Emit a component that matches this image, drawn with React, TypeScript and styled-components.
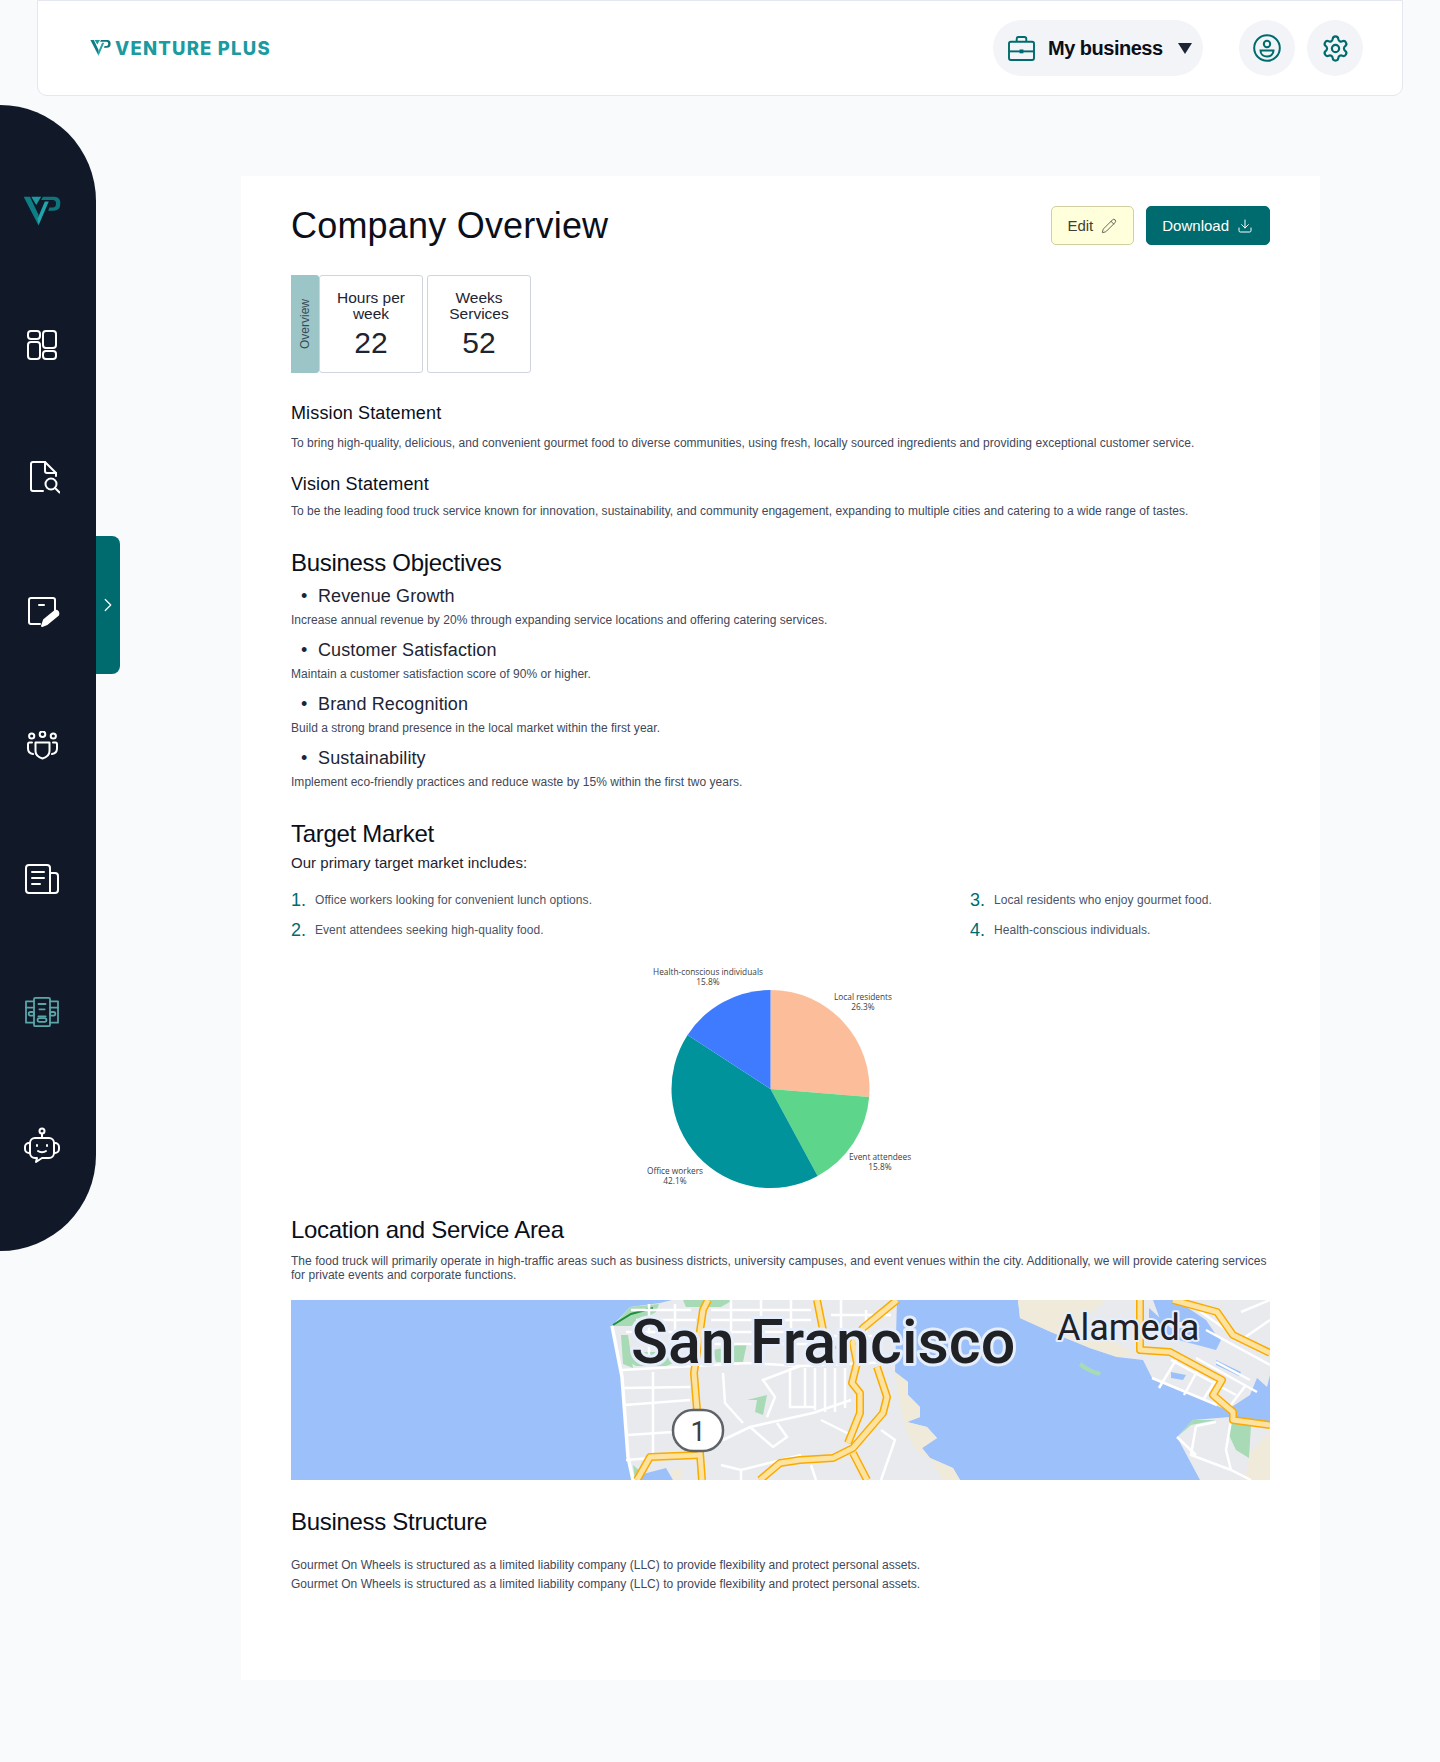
import styled, { createGlobalStyle } from "styled-components";
import { Download, Pencil, Settings, ChevronRight } from "lucide-react";

const GlobalStyle = createGlobalStyle`
  body {
    margin: 0;
    background: #f9fafc;
    font-family: "Liberation Sans", Arial, sans-serif;
    color: #101828;
  }
`;

const Page = styled.div`
  width: 1440px;
  height: 1762px;
  overflow: hidden;
`;

const TopBar = styled.header`
  box-sizing: border-box;
  margin: 0 37px;
  height: 96px;
  padding: 0 39px 0 52px;
  display: flex;
  align-items: center;
  background: #fff;
  border: 1px solid #e4e7f0;
  border-radius: 0 0 10px 10px;
`;

const Logo = styled.div`
  display: flex;
  align-items: center;
  gap: 4px;
  flex: 1;
  font-family: "Inter", sans-serif;
  font-size: 18.5px;
  font-weight: 800;
  letter-spacing: 1.2px;
  color: #1b9aa0;
`;

const BusinessPill = styled.div`
  box-sizing: border-box;
  flex: none;
  width: 210px;
  height: 56px;
  margin-right: 24px;
  padding: 0 15px;
  display: flex;
  align-items: center;
  gap: 13px;
  border-radius: 28px;
  background: #f2f4f8;
  font-size: 20px;
  font-weight: 700;
  letter-spacing: -0.5px;
  color: #0b0f19;
  white-space: nowrap;
`;

const Caret = styled.span`
  flex: none;
  width: 0;
  height: 0;
  margin-left: 2px;
  border-left: 7.5px solid transparent;
  border-right: 7.5px solid transparent;
  border-top: 11px solid #1d2433;
`;

const RoundButton = styled.div`
  flex: none;
  width: 56px;
  height: 56px;
  margin-left: 12px;
  display: flex;
  align-items: center;
  justify-content: center;
  border-radius: 50%;
  background: #f2f4f8;
  color: #006b6e;
`;

const Body = styled.div`
  display: flex;
  align-items: flex-start;
  margin-top: 9px;
`;

const Sidebar = styled.nav`
  position: relative;
  box-sizing: border-box;
  flex: none;
  width: 96px;
  height: 1146px;
  padding: 86px 12px 0 0;
  display: flex;
  flex-direction: column;
  align-items: center;
  gap: 93.5px;
  background: #111827;
  border-radius: 0 96px 96px 0;
`;

const NavIcon = styled.div<{ $active?: boolean }>`
  height: 40px;
  display: flex;
  align-items: center;
  justify-content: center;
  color: ${(p) => (p.$active ? "#5ba6aa" : "#fff")};
`;

const Handle = styled.div`
  position: absolute;
  left: 96px;
  top: 431px;
  width: 24px;
  height: 138px;
  display: flex;
  align-items: center;
  justify-content: center;
  background: #006b6e;
  border-radius: 0 8px 8px 0;
  color: #fff;
`;

const Card = styled.main`
  box-sizing: border-box;
  flex: none;
  width: 1079px;
  height: 1504px;
  margin: 71px 0 0 145px;
  padding: 30px 50px 0;
  background: #fff;
`;

const TitleRow = styled.div`
  display: flex;
  align-items: flex-start;
  height: 40px;
  margin-bottom: 29px;
`;

const Title = styled.h1`
  flex: 1;
  margin: 0;
  font-size: 36px;
  line-height: 40px;
  font-weight: 400;
  letter-spacing: 0.2px;
  color: #0b0f19;
`;

const ActionButton = styled.div<{ $primary?: boolean }>`
  box-sizing: border-box;
  height: 39px;
  margin-left: 12px;
  padding: 0 16px 0 15px;
  display: flex;
  align-items: center;
  gap: 8px;
  border-radius: 5px;
  font-size: 15px;
  background: ${(p) => (p.$primary ? "#006b6e" : "#ffffdc")};
  border: 1px solid ${(p) => (p.$primary ? "#006b6e" : "#d2cfa0")};
  color: ${(p) => (p.$primary ? "#fff" : "#403f36")};
`;

const Stats = styled.div`
  display: flex;
  height: 98px;
  margin-bottom: 29px;
`;

const StatsLabel = styled.div`
  box-sizing: border-box;
  width: 28px;
  display: flex;
  align-items: center;
  justify-content: center;
  background: #9cc5c8;
  border-radius: 3px 0 0 3px;
  font-size: 12px;
  color: #3a4a55;
  writing-mode: vertical-rl;
  transform: rotate(180deg);
`;

const StatCard = styled.div<{ $width: number; $gap?: number }>`
  box-sizing: border-box;
  width: ${(p) => p.$width}px;
  margin-left: ${(p) => p.$gap ?? 0}px;
  padding-top: 14px;
  text-align: center;
  border: 1px solid #cfd4e0;
  border-radius: 3px;
  color: #1d2433;
`;

const StatTitle = styled.div`
  font-size: 15.5px;
  line-height: 16px;
`;

const StatValue = styled.div`
  margin-top: 4px;
  font-size: 30px;
  line-height: 34px;
`;

const SubHeading = styled.h3<{ $top: number }>`
  margin: ${(p) => p.$top}px 0 0;
  font-size: 18px;
  line-height: 22px;
  font-weight: 400;
  letter-spacing: 0.13px;
  color: #0b0f19;
`;

const Heading = styled.h2<{ $top: number }>`
  margin: ${(p) => p.$top}px 0 0;
  font-size: 24px;
  line-height: 28px;
  font-weight: 400;
  letter-spacing: -0.3px;
  color: #0b0f19;
`;

const Text = styled.p<{ $top: number }>`
  margin: ${(p) => p.$top}px 0 0;
  font-size: 12px;
  line-height: 14px;
  letter-spacing: 0.03px;
  color: #3f4859;
`;

const Bullet = styled.div<{ $first?: boolean }>`
  margin-top: ${(p) => (p.$first ? 8 : 12)}px;
  padding-left: 27px;
  position: relative;
  font-size: 18px;
  line-height: 22px;
  letter-spacing: 0.12px;
  color: #1d2433;

  &::before {
    content: "•";
    position: absolute;
    left: 10px;
  }
`;

const Lead = styled.p`
  margin: 6px 0 0;
  font-size: 15px;
  line-height: 18px;
  letter-spacing: 0.03px;
  color: #1d2433;
`;

const MarketList = styled.div`
  display: grid;
  grid-template-columns: 679px 1fr;
  grid-auto-flow: column;
  grid-template-rows: 30px 30px;
  margin-top: 13px;
`;

const MarketItem = styled.div`
  display: flex;
  align-items: center;
  font-size: 12px;
  letter-spacing: 0.06px;
  color: #4a5365;
`;

const MarketNumber = styled.span`
  width: 24px;
  font-size: 18px;
  color: #006b6e;
`;

const PieWrap = styled.div`
  display: flex;
  justify-content: center;
  margin-top: 19px;
`;

const MapWrap = styled.div`
  margin-top: 18px;
  height: 180px;
  line-height: 0;
`;

const polar = (pct: number, r: number) => {
  const a = (pct / 100) * Math.PI * 2;
  return [139.5 + r * Math.sin(a), 125 - r * Math.cos(a)];
};

const slices = [
  { from: 0, to: 26.3, color: "#fcbd9b" },
  { from: 26.3, to: 42.1, color: "#5dd58b" },
  { from: 42.1, to: 84.2, color: "#00939b" },
  { from: 84.2, to: 100, color: "#3f7bff" },
];

const pieLabels = [
  { x: 77, y: 11, a: "Health-conscious individuals", b: "15.8%" },
  { x: 232, y: 36, a: "Local residents", b: "26.3%" },
  { x: 249, y: 196, a: "Event attendees", b: "15.8%" },
  { x: 44, y: 210, a: "Office workers", b: "42.1%" },
];

const PieChart = () => (
  <svg width="300" height="240" viewBox="0 0 300 240">
    {slices.map((s) => {
      const [x1, y1] = polar(s.from, 99);
      const [x2, y2] = polar(s.to, 99);
      const large = s.to - s.from > 50 ? 1 : 0;
      return (
        <path
          key={s.color}
          d={`M139.5 125L${x1} ${y1}A99 99 0 ${large} 1 ${x2} ${y2}Z`}
          fill={s.color}
        />
      );
    })}
    {pieLabels.map((l) => (
      <text
        key={l.a}
        textAnchor="middle"
        fontFamily="Open Sans, sans-serif"
        fontSize="8.3"
        fill="#3d3d3d"
      >
        <tspan x={l.x} y={l.y}>
          {l.a}
        </tspan>
        <tspan x={l.x} y={l.y + 10}>
          {l.b}
        </tspan>
      </text>
    ))}
  </svg>
);

const highways = [
  "M417 0L412 10L403 73L406 110L409 153L411 180",
  "M346 180L359 157L409 155",
  "M526 0L532 30L542 50",
  "M469 180L489 163L509 160L542 158L562 148L592 113L596 97L586 67",
  "M557 143L569 113L569 93L561 83L566 63L562 43L572 28L606 0",
  "M562 153L576 180",
  "M849 0V50L879 52L931 80L922 95L942 112V120L979 125",
  "M882 0L926 12L942 35L979 53",
];

const streets = [
  "M331 70L456 63L509 66L600 62",
  "M332 88L399 87M334 105L399 100M337 135L382 132",
  "M335 160L400 155",
  "M362 72V155",
  "M432 73L434 103L452 123",
  "M432 140L459 127L522 113L560 100",
  "M459 127L482 147L496 137L486 123",
  "M476 117L484 97L472 80L509 66",
  "M430 165L450 170L510 155",
  "M340 10H400M345 20H405M335 32H400M420 10H520M420 20H520M420 32H520M420 44H520",
  "M358 4V60M384 4V60M440 0V60M470 0V60M500 0V60",
  "M499 68V107H525M514 68V108M524 68V110M534 68V112M544 68V112M554 68V108",
  "M540 15H600M540 36H590M550 0V60M575 10V50",
  "M530 120L560 135",
  "M590 130L604 140L590 180",
  "M520 165L525 180M450 170V180",
  "M861 78L926 105M880 60L945 95M905 58L966 92M925 62L959 80",
  "M885 60L868 88M908 68L893 95M928 75L912 100M955 85L936 110",
  "M900 5L950 40L979 20M915 30L979 65M950 12L979 0",
  "M905 126L900 155L940 170L960 180M905 155L886 137M925 122L905 126M940 120L935 150L940 170",
];

const MapImage = () => (
  <svg width="979" height="180" viewBox="0 0 979 180">
    <rect width="979" height="180" fill="#9cc0f9" />
    <path
      d="M321 26L339 7L369 3L381 0H606L604 72L617 82L617 95L629 107V117L616 122L636 127L646 138L631 148L639 158L662 168L669 180H342L337 157L331 77Z"
      fill="#e9eaee"
    />
    <path
      d="M604 72L617 82L617 95L629 107V117L616 122L636 127L646 138L631 148L639 158L662 168L669 180H652L640 160L625 150L615 130L608 100Z"
      fill="#f0eadb"
    />
    <path d="M322 26L339 7L368 4L365 12L340 26Z" fill="#a8dab5" />
    <path d="M322 25L340 14L362 8" fill="none" stroke="#1e8e3e" strokeWidth="2" />
    <path d="M392 0H442L430 7H395Z" fill="#a8dab5" />
    <path d="M330 35L337 35L342 68L332 64Z" fill="#a8dab5" />
    <path d="M335 60L345 66H375L390 60L375 52H340Z" fill="#a8dab5" />
    <path d="M422 50L456 43L452 62L425 62Z" fill="#a8dab5" />
    <path d="M456 100L476 95L472 115L464 112L466 100Z" fill="#a8dab5" />
    <path d="M342 165L350 172L344 180Z" fill="#a8dab5" />
    <path d="M352 174L375 168L382 180H345Z" fill="#9cc0f9" />
    <path d="M380 170L392 168L390 180H382Z" fill="#f0eadb" />
    <path
      d="M727 0L729 18L760 32L799 48L826 57L852 60L861 78L912 100L936 110L959 95L966 78L976 87L979 75V0Z"
      fill="#e9eaee"
    />
    <path d="M727 0L729 18L760 32L799 48L826 57L845 55L790 22L815 0Z" fill="#f0eadb" />
    <path d="M858 8L880 28L905 28L915 24L930 40L925 50L880 38L858 24Z" fill="#9cc0f9" />
    <path d="M852 0H880L910 14L935 42L979 60V0Z" fill="#e9eaee" />
    <path d="M862 0H885L915 20L925 35L900 22L870 22Z" fill="#9cc0f9" />
    <path d="M925 60L950 72L948 76L925 65ZM880 72L895 75L892 80L880 78Z" fill="#9cc0f9" />
    <path d="M790 62Q800 70 810 72L808 76Q795 72 788 66Z" fill="#a8dab5" />
    <path d="M886 137L902 120L939 117L979 122V180H909Z" fill="#e9eaee" />
    <path d="M886 137L902 120L925 120L900 125Z" fill="#a8dab5" />
    <path d="M938 118L960 125L958 158L945 150L938 135Z" fill="#a8dab5" />
    <path d="M959 152L979 132V180H954Z" fill="#f0eadb" />
    {streets.map((d) => (
      <path key={d} d={d} fill="none" stroke="#fff" strokeWidth="2.5" />
    ))}
    <path d="M321 26L331 77L337 157L342 180" fill="none" stroke="#fff" strokeWidth="3.5" />
    {highways.map((d) => (
      <path key={d} d={d} fill="none" stroke="#f9ab00" strokeWidth="8" strokeLinejoin="round" />
    ))}
    {highways.map((d) => (
      <path
        key={`${d}-inner`}
        d={d}
        fill="none"
        stroke="#fee29f"
        strokeWidth="5"
        strokeLinejoin="round"
      />
    ))}
    <rect x="382" y="110" width="50" height="41" rx="20" fill="#fff" stroke="#5f6368" strokeWidth="2.5" />
    <text
      x="407"
      y="141"
      textAnchor="middle"
      fontFamily="Roboto, sans-serif"
      fontSize="27"
      fill="#3c4043"
    >
      1
    </text>
    <text
      x="340"
      y="63"
      fontFamily="Roboto, sans-serif"
      fontSize="61"
      fontWeight="500"
      fill="#202124"
      stroke="#e6eefc"
      strokeWidth="6"
      strokeLinejoin="round"
      paintOrder="stroke"
    >
      San Francisco
    </text>
    <text
      x="766"
      y="40"
      fontFamily="Roboto, sans-serif"
      fontSize="36"
      fill="#202124"
      stroke="#e6eefc"
      strokeWidth="4"
      strokeLinejoin="round"
      paintOrder="stroke"
    >
      Alameda
    </text>
  </svg>
);

const VpMark = ({ size }: { size: number }) => (
  <svg width={size} height={(size * 95) / 115} viewBox="0 0 115 95">
    <path d="M25 5H55L40 30Z" fill="#1b9aa0" />
    <path d="M2 5H21L47 60V92Z" fill="#0f7d85" />
    <path d="M47 92L44 72L66 20H78Z" fill="#1fa5ab" />
    <path
      d="M60 5H95Q113 5 113 26Q113 48 92 48H76L80 38H90Q100 38 100 26Q100 15 90 15H55Z"
      fill="#0e757c"
    />
  </svg>
);

const iconProps = {
  fill: "none",
  stroke: "currentColor",
  strokeWidth: 2,
  strokeLinecap: "round" as const,
  strokeLinejoin: "round" as const,
};

const DashboardIcon = () => (
  <svg width="32" height="32" viewBox="0 0 32 32" {...iconProps}>
    <rect x="2" y="2" width="12" height="8" rx="3" />
    <rect x="2" y="13" width="12" height="17" rx="3" />
    <rect x="17" y="2" width="13" height="17" rx="3" />
    <rect x="17" y="22" width="13" height="8" rx="3" />
  </svg>
);

const DocSearchIcon = () => (
  <svg width="36" height="36" viewBox="-3 0 36 36" {...iconProps}>
    <path d="M16 31H6a2 2 0 0 1-2-2V4a2 2 0 0 1 2-2h12l11 11v3" />
    <path d="M18 2v9a2 2 0 0 0 2 2h9" />
    <circle cx="24" cy="24" r="5.500" />
    <path d="M28 28l4.500 4.500" />
  </svg>
);

const NoteEditIcon = () => (
  <svg width="36" height="36" viewBox="-1 0 36 36" {...iconProps}>
    <path d="M15 30H6a2 2 0 0 1-2-2V6a2 2 0 0 1 2-2h22a2 2 0 0 1 2 2v12" />
    <path d="M14 11h5" />
    <path d="M17 32l2-6 11-9c3-1 4 2 3 4L22 30Z" fill="currentColor" />
  </svg>
);

const TeamIcon = () => (
  <svg width="33" height="29" viewBox="0 0 33 29" {...iconProps}>
    <circle cx="16.500" cy="3.300" r="2.800" />
    <circle cx="5.700" cy="5" r="2.600" />
    <circle cx="27.300" cy="5" r="2.600" />
    <path d="M9.500 11.500h14v8.500c0 4-3.500 6.500-7 7.500-3.500-1-7-3.500-7-7.500Z" />
    <path d="M6 11.500H3.500c-1 0-1.500 .8-1.500 2v4c0 3 2 5 5 5.500" />
    <path d="M27 11.500h2.500c1 0 1.500 .8 1.500 2v4c0 3-2 5-5 5.500" />
  </svg>
);

const NewsIcon = () => (
  <svg width="36" height="32" viewBox="0 0 36 32" {...iconProps}>
    <path d="M5 2h18a3 3 0 0 1 3 3v25H5a3 3 0 0 1-3-3V5a3 3 0 0 1 3-3Z" />
    <path d="M26 10h5a3 3 0 0 1 3 3v14a3 3 0 0 1-3 3h-5" />
    <path d="M8 9h12M8 15h12M8 21h8" />
  </svg>
);

const StrategyIcon = () => (
  <svg width="40" height="32" viewBox="0 0 40 36" {...iconProps}>
    <rect x="11" y="2" width="18" height="32" rx="1.500" />
    <path d="M11 6H2v24h9M29 6h9v24h-9" />
    <path d="M16 9h8M17 15h6M16 23h8" />
    <rect x="15" y="25" width="10" height="4" rx="2" />
    <path d="M2 13h9M29 13h9" />
    <rect x="5" y="18" width="6" height="4" rx="2" />
    <rect x="29" y="18" width="6" height="4" rx="2" />
  </svg>
);

const BotIcon = () => (
  <svg width="38" height="38" viewBox="0 0 38 38" {...iconProps}>
    <circle cx="19" cy="4" r="2.500" />
    <path d="M19 6.500V11" />
    <path d="M12 11h14a5 5 0 0 1 5 5v10a5 5 0 0 1-5 5h-7l-6 4 1-4h-2a5 5 0 0 1-5-5V16a5 5 0 0 1 5-5Z" />
    <path d="M7 16H6a4 4 0 0 0-4 4v2a4 4 0 0 0 4 4h1M31 16h1a4 4 0 0 1 4 4v2a4 4 0 0 1-4 4h-1" />
    <path d="M14 18v1M24 18v1M15 24c2 1.500 6 1.500 8 0" />
  </svg>
);

const BriefcaseSvg = styled.svg`
  flex: none;
`;

const BriefcaseIcon = () => (
  <BriefcaseSvg width="27" height="25" viewBox="0 0 28 26" fill="none" stroke="#006b6e" strokeWidth="2">
    <rect x="1" y="6" width="26" height="19" rx="2" />
    <path d="M9 6V3a2 2 0 0 1 2-2h6a2 2 0 0 1 2 2v3" />
    <path d="M1 16h26" />
    <rect x="12" y="14" width="4" height="4" fill="#006b6e" stroke="none" />
  </BriefcaseSvg>
);

const UserIcon = () => (
  <svg width="28" height="28" viewBox="0 0 28 28" fill="none" stroke="#006b6e" strokeWidth="2">
    <circle cx="14" cy="14" r="12.800" />
    <circle cx="14" cy="10" r="3.200" />
    <path d="M7.500 16.500h13c0 4-3 6-6.500 6s-6.500-2-6.500-6Z" />
  </svg>
);

const objectives = [
  ["Revenue Growth", "Increase annual revenue by 20% through expanding service locations and offering catering services."],
  ["Customer Satisfaction", "Maintain a customer satisfaction score of 90% or higher."],
  ["Brand Recognition", "Build a strong brand presence in the local market within the first year."],
  ["Sustainability", "Implement eco-friendly practices and reduce waste by 15% within the first two years."],
];

const market = [
  "Office workers looking for convenient lunch options.",
  "Event attendees seeking high-quality food.",
  "Local residents who enjoy gourmet food.",
  "Health-conscious individuals.",
];

const structure =
  "Gourmet On Wheels is structured as a limited liability company (LLC) to provide flexibility and protect personal assets.";

export default function App() {
  return (
    <Page>
      <GlobalStyle />
      <TopBar>
        <Logo>
          <VpMark size={21} />
          VENTURE PLUS
        </Logo>
        <BusinessPill>
          <BriefcaseIcon />
          My business
          <Caret />
        </BusinessPill>
        <RoundButton>
          <UserIcon />
        </RoundButton>
        <RoundButton>
          <Settings size={29} strokeWidth={1.8} />
        </RoundButton>
      </TopBar>
      <Body>
        <Sidebar>
          <NavIcon>
            <VpMark size={38} />
          </NavIcon>
          <NavIcon>
            <DashboardIcon />
          </NavIcon>
          <NavIcon>
            <DocSearchIcon />
          </NavIcon>
          <NavIcon>
            <NoteEditIcon />
          </NavIcon>
          <NavIcon>
            <TeamIcon />
          </NavIcon>
          <NavIcon>
            <NewsIcon />
          </NavIcon>
          <NavIcon $active>
            <StrategyIcon />
          </NavIcon>
          <NavIcon>
            <BotIcon />
          </NavIcon>
          <Handle>
            <ChevronRight size={22} strokeWidth={1.3} />
          </Handle>
        </Sidebar>
        <Card>
          <TitleRow>
            <Title>Company Overview</Title>
            <ActionButton>
              Edit
              <Pencil size={16} strokeWidth={1.2} />
            </ActionButton>
            <ActionButton $primary>
              Download
              <Download size={16} strokeWidth={1.5} />
            </ActionButton>
          </TitleRow>
          <Stats>
            <StatsLabel>Overview</StatsLabel>
            <StatCard $width={104}>
              <StatTitle>
                Hours per
                <br />
                week
              </StatTitle>
              <StatValue>22</StatValue>
            </StatCard>
            <StatCard $width={104} $gap={4}>
              <StatTitle>
                Weeks
                <br />
                Services
              </StatTitle>
              <StatValue>52</StatValue>
            </StatCard>
          </Stats>
          <SubHeading $top={0}>Mission Statement</SubHeading>
          <Text $top={12}>
            To bring high-quality, delicious, and convenient gourmet food to diverse communities, using fresh,
            locally sourced ingredients and providing exceptional customer service.
          </Text>
          <SubHeading $top={23}>Vision Statement</SubHeading>
          <Text $top={9}>
            To be the leading food truck service known for innovation, sustainability, and community engagement,
            expanding to multiple cities and catering to a wide range of tastes.
          </Text>
          <Heading $top={31}>Business Objectives</Heading>
          {objectives.map(([name, text], i) => (
            <div key={name}>
              <Bullet $first={i === 0}>{name}</Bullet>
              <Text $top={6}>{text}</Text>
            </div>
          ))}
          <Heading $top={31}>Target Market</Heading>
          <Lead>Our primary target market includes:</Lead>
          <MarketList>
            {market.map((m, i) => (
              <MarketItem key={m}>
                <MarketNumber>{i + 1}.</MarketNumber>
                {m}
              </MarketItem>
            ))}
          </MarketList>
          <PieWrap>
            <PieChart />
          </PieWrap>
          <Heading $top={12}>Location and Service Area</Heading>
          <Text $top={10}>
            The food truck will primarily operate in high-traffic areas such as business districts, university
            campuses, and event venues within the city. Additionally, we will provide catering services for private
            events and corporate functions.
          </Text>
          <MapWrap>
            <MapImage />
          </MapWrap>
          <Heading $top={28}>Business Structure</Heading>
          <Text $top={22}>{structure}</Text>
          <Text $top={5}>{structure}</Text>
        </Card>
      </Body>
    </Page>
  );
}
